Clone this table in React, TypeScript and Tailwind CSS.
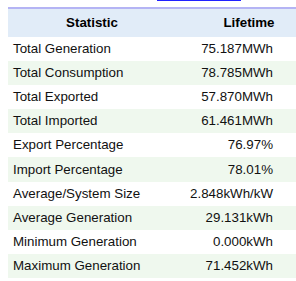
const ROWS = [
  ['Total Generation', '75.187MWh'],
  ['Total Consumption', '78.785MWh'],
  ['Total Exported', '57.870MWh'],
  ['Total Imported', '61.461MWh'],
  ['Export Percentage', '76.97%'],
  ['Import Percentage', '78.01%'],
  ['Average/System Size', '2.848kWh/kW'],
  ['Average Generation', '29.131kWh'],
  ['Minimum Generation', '0.000kWh'],
  ['Maximum Generation', '71.452kWh'],
] as const;

export default function App() {
  return (
    <div
      className="w-[296px] h-[281px] overflow-hidden bg-white relative"
      style={{ fontFamily: '"Liberation Sans", Arial, sans-serif' }}
    >
      {/* link underline peeking from above */}
      <div className="absolute left-[157px] top-0 w-[84px] h-px bg-[#2020ff]" />
      <div className="pt-[7px] pl-[8px]">
        <table className="w-[314px] border-collapse text-[13.33px] text-[#111]">
          <thead>
            <tr className="h-[28.5px] bg-[#e1ecf8] border-t-2 border-[#b4b4f4]">
              <th className="w-[168px] p-0 text-center font-bold text-black">Statistic</th>
              <th className="p-0 text-center font-bold text-black">Lifetime</th>
            </tr>
          </thead>
          <tbody>
            {ROWS.map(([label, value], i) => (
              <tr key={label} className={`h-[24.2px] ${i % 2 === 1 ? 'bg-[#eff8ee]' : 'bg-white'}`}>
                <td className="p-0 pl-[5px] text-left">{label}</td>
                <td className="p-0 pr-[49px] text-right">{value}</td>
              </tr>
            ))}
          </tbody>
        </table>
      </div>
    </div>
  );
}
